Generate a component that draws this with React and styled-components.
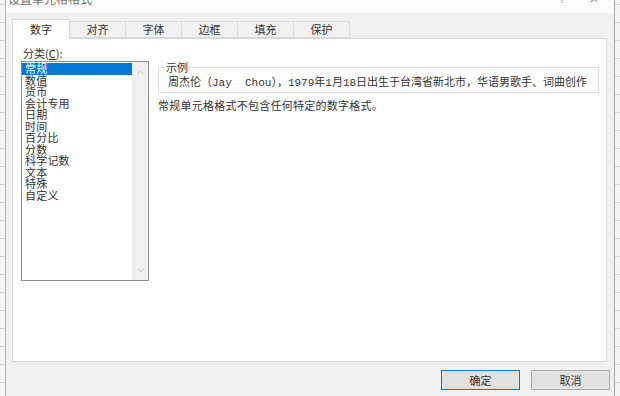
import styled, { createGlobalStyle } from 'styled-components'
import { ChevronUp, ChevronDown } from 'lucide-react'

const GlobalStyle = createGlobalStyle`
  html, body {
    margin: 0;
    padding: 0;
  }
  body {
    font-family: "Noto Sans CJK SC", "Liberation Sans", sans-serif;
  }
`

const categories = ['常规', '数值', '货币', '会计专用', '日期', '时间', '百分比', '分数', '科学记数', '文本', '特殊', '自定义']
const tabs = ['数字', '对齐', '字体', '边框', '填充', '保护']

const App = () => {
  return (
    <>
      <GlobalStyle />
      <Desktop>
        <Window>
          <TitleBar>
            <Title>设置单元格格式</Title>
            <TitleButton>?</TitleButton>
            <TitleButton $close>×</TitleButton>
          </TitleBar>
          <TabStrip>
            {tabs.map((t, i) => (
              <Tab key={t} $active={i === 0}>{t}</Tab>
            ))}
          </TabStrip>
          <Panel>
            <LeftCol>
              <FieldLabel>分类(<u>C</u>):</FieldLabel>
              <ListBox>
                <Items>
                  {categories.map((c, i) => (
                    <Item key={c} $selected={i === 0}>{c}</Item>
                  ))}
                </Items>
                <ScrollBar>
                  <ChevronUp size={11} strokeWidth={1.5} />
                  <ChevronDown size={11} strokeWidth={1.5} />
                </ScrollBar>
              </ListBox>
            </LeftCol>
            <RightCol>
              <Group>
                <Legend>示例</Legend>
                <Sample>周杰伦（Jay  Chou），1979年1月18日出生于台湾省新北市，华语男歌手、词曲创作</Sample>
              </Group>
              <Description>常规单元格格式不包含任何特定的数字格式。</Description>
            </RightCol>
          </Panel>
          <ButtonRow>
            <Button $default>确定</Button>
            <Button>取消</Button>
          </ButtonRow>
        </Window>
      </Desktop>
    </>
  )
}

export default App

const Desktop = styled.div`
  width: 620px;
  height: 396px;
  overflow: hidden;
  display: flex;
  background-color: #f4f4f4;
  background-image: repeating-linear-gradient(
    to bottom,
    transparent 0,
    transparent 17px,
    #d4d4d4 17px,
    #d4d4d4 18px
  );
  background-position: 0 5px;
`

const Window = styled.div`
  margin: -10px 5px 0 5px;
  width: 609px;
  height: 420px;
  background: #f0f0f0;
  border-left: 1px solid #b4b4b4;
  border-right: 1px solid #a8a8a8;
  display: flex;
  flex-direction: column;
`

const TitleBar = styled.div`
  height: 23px;
  background: #fbfbfb;
  display: flex;
  align-items: center;
  padding: 0 10px 0 2px;
`

const Title = styled.div`
  flex: 1;
  font-size: 12px;
  color: #707070;
  margin-top: -6px;
`

const TitleButton = styled.div`
  width: ${p => (p.$close ? '20px' : '44px')};
  font-family: "Liberation Sans", sans-serif;
  font-size: ${p => (p.$close ? '15px' : '11px')};
  color: #9a9a9a;
  margin-top: -6px;
  text-align: center;
`

const TabStrip = styled.div`
  display: flex;
  align-items: flex-end;
  padding: 0 0 0 6px;
  height: 25px;
  position: relative;
  z-index: 1;
`

const Tab = styled.div`
  box-sizing: border-box;
  width: ${p => (p.$active ? '58px' : '57px')};
  height: ${p => (p.$active ? '20px' : '17px')};
  margin-bottom: ${p => (p.$active ? '-1px' : '0')};
  margin-left: -1px;
  border: 1px solid #d9d9d9;
  border-bottom: ${p => (p.$active ? 'none' : '1px solid #d9d9d9')};
  background: ${p => (p.$active ? '#ffffff' : '#f0f0f0')};
  font-size: 11px;
  line-height: ${p => (p.$active ? '18px' : '15px')};
  color: #333;
  text-align: center;
  &:first-child {
    margin-left: 0;
  }
`

const Panel = styled.div`
  box-sizing: border-box;
  margin: 0 7px 0 6px;
  height: 324px;
  background: #fff;
  border: 1px solid #d9d9d9;
  display: flex;
  gap: 9px;
  padding: 9px 7px 0 8px;
`

const LeftCol = styled.div`
  display: flex;
  flex-direction: column;
`

const FieldLabel = styled.div`
  font-size: 11px;
  line-height: 11px;
  color: #333;
  padding-left: 2px;
  margin-bottom: 2px;
  u {
    text-decoration-thickness: 1px;
    text-underline-offset: 1px;
  }
`

const ListBox = styled.div`
  box-sizing: border-box;
  width: 128px;
  height: 220px;
  border: 1px solid #8a8d95;
  display: flex;
`

const Items = styled.div`
  flex: 1;
  padding-top: 1px;
`

const Item = styled.div`
  height: 11.5px;
  font-size: 11px;
  line-height: 11.5px;
  padding-left: 3px;
  letter-spacing: 0.2px;
  color: ${p => (p.$selected ? '#fff' : '#333')};
  background: ${p => (p.$selected ? '#0078d7' : 'transparent')};
`

const ScrollBar = styled.div`
  width: 16px;
  background: #f0f0f0;
  display: flex;
  flex-direction: column;
  justify-content: space-between;
  align-items: center;
  padding: 5px 0 4px;
  color: #a6a6a6;
`

const RightCol = styled.div`
  flex: 1;
  padding-top: 13px;
`

const Group = styled.fieldset`
  margin: 0;
  min-width: 0;
  padding: 0 0 3px 9px;
  border: 1px solid #dcdcdc;
`

const Legend = styled.legend`
  font-size: 11px;
  line-height: 12px;
  color: #333;
  padding: 0 1px;
  margin-left: -3px;
`

const Sample = styled.div`
  font-family: "Liberation Mono", "Noto Sans CJK SC", monospace;
  font-size: 11px;
  line-height: 12px;
  color: #333;
  white-space: pre;
  margin-top: 4px;
`

const Description = styled.div`
  font-size: 11px;
  line-height: 12px;
  letter-spacing: 0.25px;
  color: #333;
  margin-top: 6px;
`

const ButtonRow = styled.div`
  display: flex;
  justify-content: flex-end;
  gap: 11px;
  padding: 8px 4px 0 0;
`

const Button = styled.button`
  box-sizing: border-box;
  width: 79px;
  height: 20px;
  padding: 0;
  background: #e1e1e1;
  border: 1px solid ${p => (p.$default ? '#0078d7' : '#adadad')};
  font-family: "Noto Sans CJK SC", sans-serif;
  font-size: 11px;
  color: #333;
`
